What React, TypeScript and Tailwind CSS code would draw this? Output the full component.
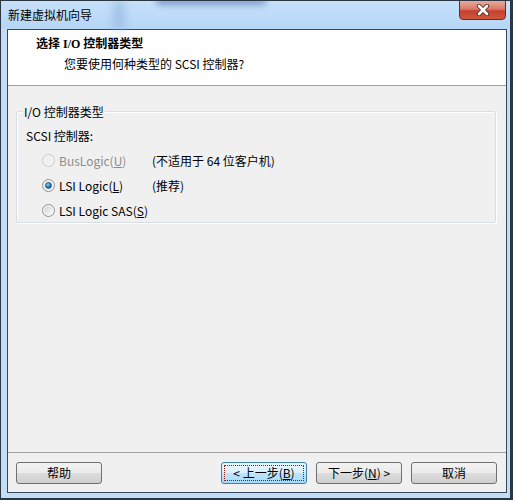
import type { ReactNode } from 'react'

const font = { fontFamily: '"Noto Sans CJK SC", "Noto Sans", sans-serif' }

function Radio({ checked = false, disabled = false }: { checked?: boolean; disabled?: boolean }) {
  return (
    <svg width="13" height="13" viewBox="0 0 13 13" className="shrink-0">
      <defs>
        <linearGradient id="rface" x1="0" y1="0" x2="1" y2="1">
          <stop offset="0" stopColor="#cfd1d3" />
          <stop offset="1" stopColor="#fbfbfb" />
        </linearGradient>
        <radialGradient id="rdot" cx="0.4" cy="0.35" r="0.7">
          <stop offset="0" stopColor="#8fd3fb" />
          <stop offset="0.5" stopColor="#2a86c8" />
          <stop offset="1" stopColor="#174f80" />
        </radialGradient>
      </defs>
      <circle cx="6.5" cy="6.5" r="6" fill="#f4f4f4" stroke={disabled ? '#c9c9c9' : '#8f9193'} />
      <circle cx="6.5" cy="6.5" r="4.3" fill={disabled ? '#f0f0f0' : 'url(#rface)'} />
      {checked && <circle cx="6.5" cy="6.5" r="3" fill="url(#rdot)" stroke="#1d4c73" strokeWidth="0.6" />}
    </svg>
  )
}

function WinButton({ children, isDefault = false }: { children: ReactNode; isDefault?: boolean }) {
  return (
    <button
      className={`w-[86px] h-[22px] rounded-[3px] border text-[12px] text-black flex items-center justify-center relative ${
        isDefault
          ? 'border-[#3c7fb1] bg-[linear-gradient(#eaf6fd_0%,#d9f0fc_50%,#bee6fd_50%,#a7d9f5_100%)]'
          : 'border-[#707070] bg-[linear-gradient(#f2f2f2_0%,#ebebeb_50%,#dddddd_50%,#cfcfcf_100%)]'
      }`}
      style={font}
    >
      {isDefault && <span className="absolute inset-[2px] border border-dotted border-[#8a1c1c] rounded-[1px]" />}
      <span className="relative leading-none">{children}</span>
    </button>
  )
}

export default function App() {
  return (
    <div
      className="w-[513px] h-[500px] flex flex-col bg-[#c3ddf6] border-l border-t border-r-[3px] border-b-[2px] border-[#2b3743] relative overflow-hidden"
      style={font}
    >
      {/* Title bar */}
      <div className="h-[28px] shrink-0 flex items-center pl-[7px] bg-[linear-gradient(#c6e0f9,#b6d6f7)] relative">
        <div className="absolute left-[155px] top-[-3px] w-[110px] h-[7px] bg-[#5b80b5] blur-[3px] rounded-full opacity-70" />
        <div className="absolute left-[112px] top-0 w-[12px] h-[28px] bg-[#8fb3da] blur-[4px] opacity-60" />
        <span className="relative text-[12px] text-black">新建虚拟机向导</span>
      </div>

      {/* Close button */}
      <div className="absolute left-[458px] top-[-1px] w-[47px] h-[20px] rounded-b-[4px] border border-[#6b2b23] bg-[linear-gradient(#e9a99b_0%,#d87a66_45%,#c4402e_55%,#d0563f_100%)] flex items-center justify-center">
        <svg width="16" height="12" viewBox="0 0 16 12">
          <path d="M4 2 L12 10 M12 2 L4 10" stroke="#5a2a24" strokeWidth="4.4" strokeLinecap="round" />
          <path d="M4 2 L12 10 M12 2 L4 10" stroke="#ffffff" strokeWidth="2.6" strokeLinecap="round" />
        </svg>
      </div>

      {/* Client row */}
      <div className="flex-1 flex pl-[6px] pr-[3px] pb-[5px]">
        <div className="flex-1 flex flex-col border border-[#35475a] bg-[#f0f0f0]">
          {/* Header */}
          <div className="h-[56px] shrink-0 bg-white border-b border-[#a0a0a0] pt-[6px]">
            <div className="pl-[28px] text-[12px] font-bold text-black leading-[17px]" style={{ fontFamily: '"Liberation Serif", "Noto Sans CJK SC", serif' }}>
              选择 I/O 控制器类型
            </div>
            <div className="pl-[56px] mt-[2px] text-[12px] text-black leading-[17px]">
              您要使用何种类型的 SCSI 控制器?
            </div>
          </div>

          {/* Body */}
          <div className="flex-1 pl-[8px] pr-[10px] pt-[25px]">
            <div className="h-[112px] border border-[#d5dfe5] rounded-[3px] relative px-[9px] pt-[15px] shadow-[inset_1px_1px_0_#ffffff,1px_1px_0_#ffffff]">
              <span className="absolute left-[6px] top-[-9px] bg-[#f0f0f0] px-[1px] text-[12px] leading-[17px] text-black">I/O 控制器类型</span>
              <div className="text-[12px] leading-[17px] text-black">SCSI 控制器:</div>
              <div className="mt-[8px] pl-[16px] flex flex-col gap-[8px] text-[12px] leading-[17px]">
                <div className="flex items-center">
                  <Radio disabled />
                  <span className="ml-[4px] w-[93px] text-[#8d8d8d]">BusLogic(<u>U</u>)</span>
                  <span className="text-black">(不适用于 64 位客户机)</span>
                </div>
                <div className="flex items-center">
                  <Radio checked />
                  <span className="ml-[4px] w-[93px] text-black">LSI Logic(<u>L</u>)</span>
                  <span className="text-black">(推荐)</span>
                </div>
                <div className="flex items-center">
                  <Radio />
                  <span className="ml-[4px] text-black">LSI Logic SAS(<u>S</u>)</span>
                </div>
              </div>
            </div>
          </div>

          {/* Footer */}
          <div className="h-[40px] shrink-0 border-t border-[#a0a0a0] flex items-start pt-[9px] pl-[8px] pr-[9px]">
            <WinButton>帮助</WinButton>
            <div className="flex-1" />
            <div className="flex gap-[9px]">
              <WinButton isDefault>
                &lt; 上一步(<u>B</u>)
              </WinButton>
              <WinButton>
                下一步(<u>N</u>) &gt;
              </WinButton>
              <WinButton>取消</WinButton>
            </div>
          </div>
        </div>
      </div>
    </div>
  )
}
